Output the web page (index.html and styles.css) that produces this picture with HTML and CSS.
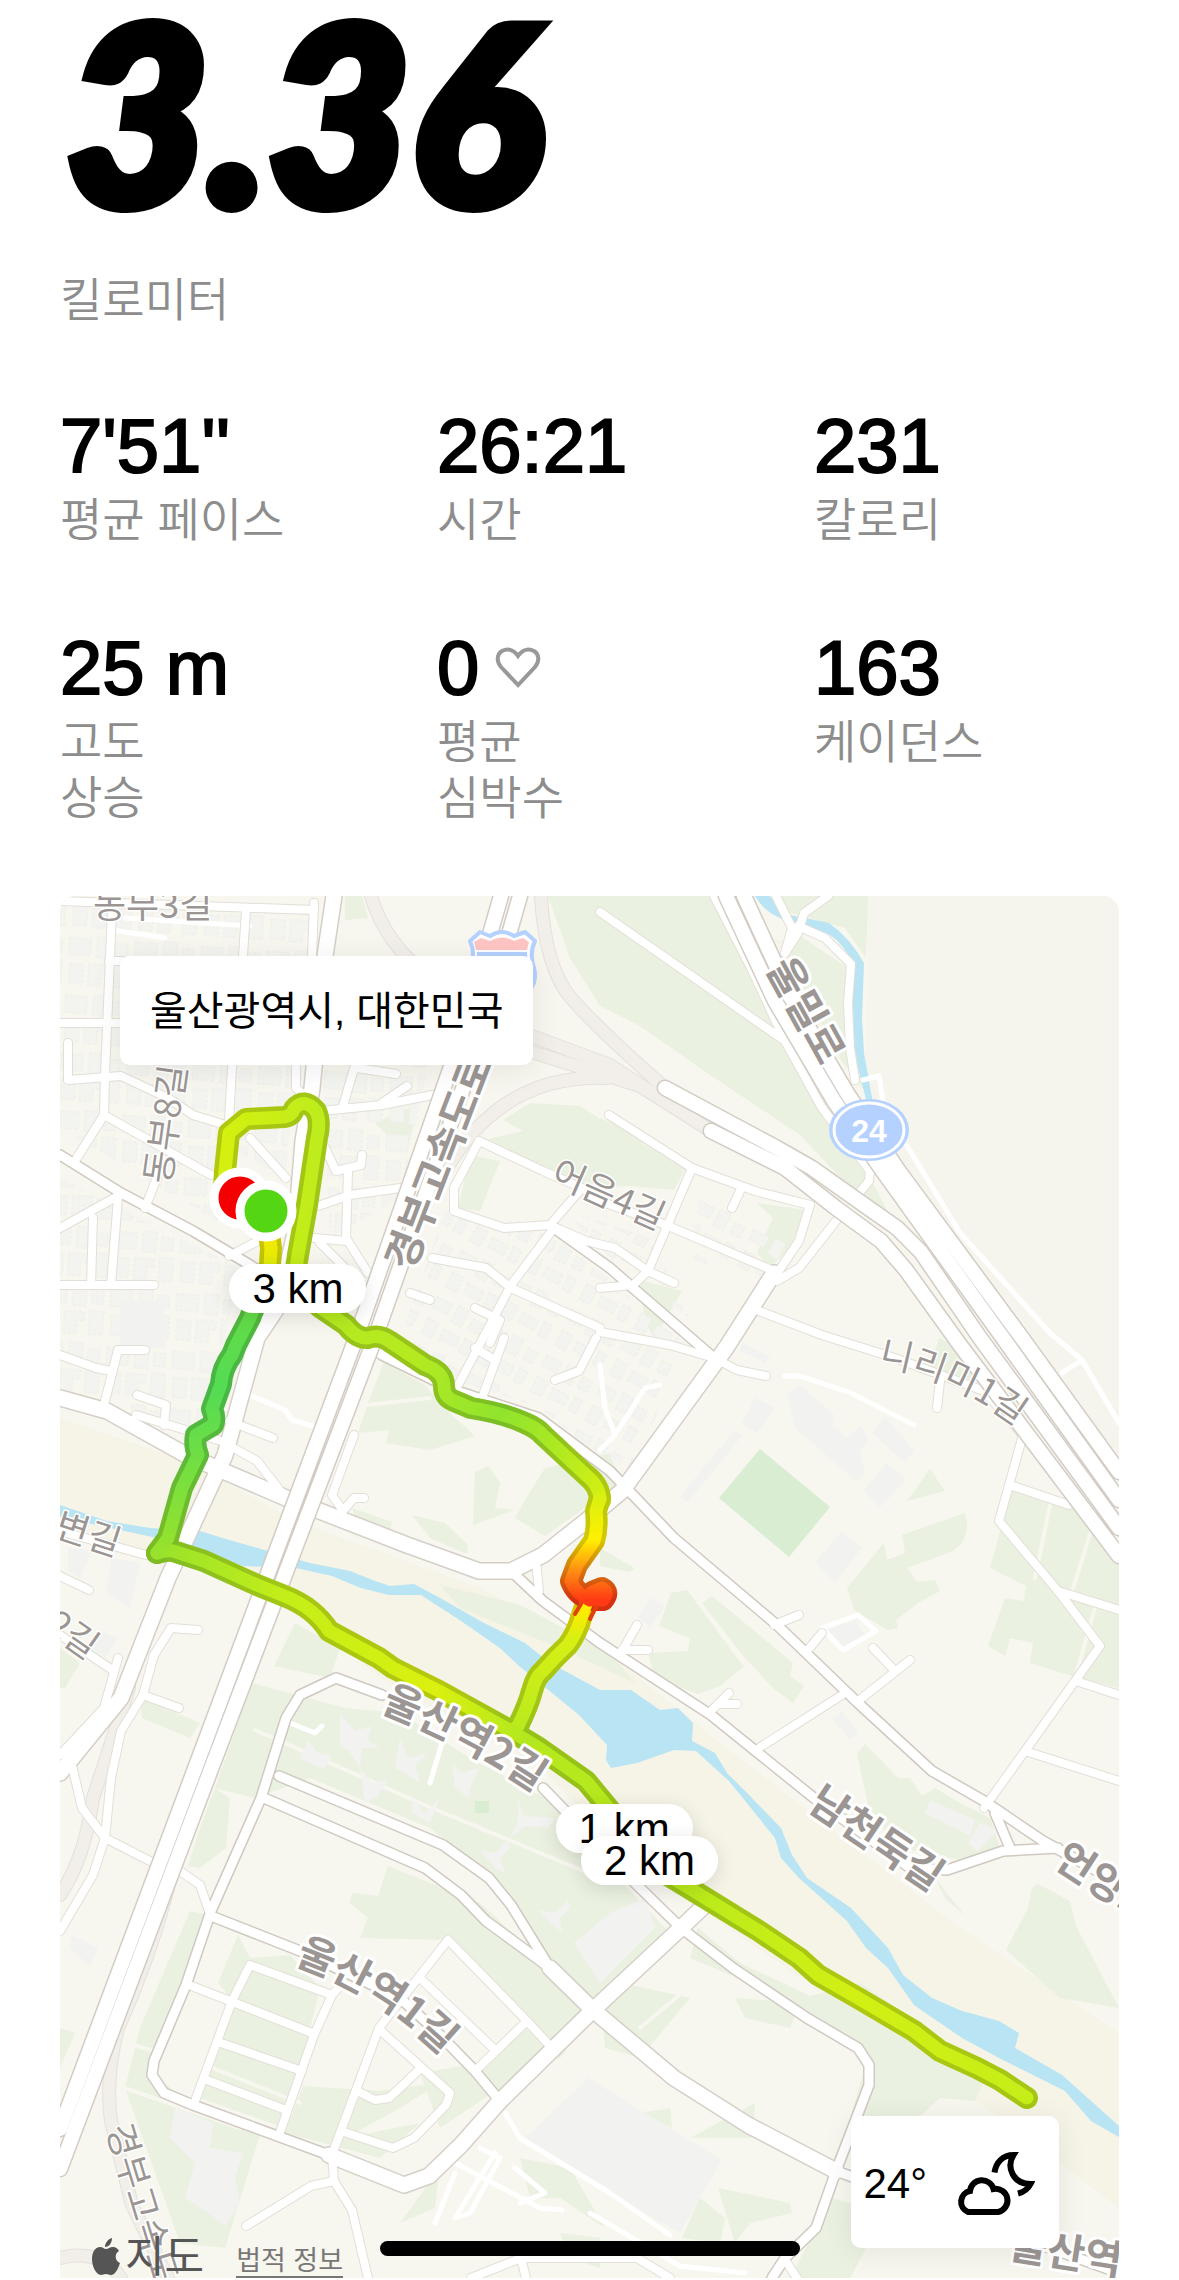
FILE: index.html
```html
<!DOCTYPE html>
<html lang="ko">
<head>
  <meta charset="UTF-8">
  <meta name="viewport" content="width=device-width, initial-scale=1.0">
  <title>러닝 기록</title>
  <link rel="stylesheet" href="styles.css">
</head>
<body>
  <main class="run">
    <header class="distance">
      <h1 class="distance-value">3.36</h1>
      <p class="label">킬로미터</p>
    </header>

    <section class="stats">
      <div class="stat">
        <p class="value">7'51''</p>
        <p class="label">평균 페이스</p>
      </div>
      <div class="stat">
        <p class="value">26:21</p>
        <p class="label">시간</p>
      </div>
      <div class="stat">
        <p class="value">231</p>
        <p class="label">칼로리</p>
      </div>
      <div class="stat">
        <p class="value">25 m</p>
        <p class="label">고도<br>상승</p>
      </div>
      <div class="stat">
        <p class="value">0
          <svg class="heart" viewBox="0 0 46 42" aria-hidden="true"><path d="M23 38 L6 20 C1 14 2 7 7 4 C13 1 19 3 23 9 C27 3 33 1 39 4 C44 7 45 14 40 20 Z"/></svg>
        </p>
        <p class="label">평균<br>심박수</p>
      </div>
      <div class="stat">
        <p class="value">163</p>
        <p class="label">케이던스</p>
      </div>
    </section>

    <section class="map">
      <svg class="map-canvas" viewBox="60 898 1059 1382" aria-label="러닝 경로 지도">
        <defs>
          <pattern id="houses" width="66" height="58" patternUnits="userSpaceOnUse" patternTransform="rotate(4)">
            <path class="house" d="M3 4h22v17h-22zM31 2h14v21h-14zM50 7h12v13h-12zM5 30h14v20h-14zM24 29h20v9h-7v13h-13zM49 27h14v24h-14z"/>
          </pattern>
          <pattern id="houses-tilted" width="62" height="52" patternUnits="userSpaceOnUse" patternTransform="rotate(28)">
            <path class="house" d="M4 5h17v12h-17zM27 3h12v18h-12zM46 8h11v12h-11zM6 28h12v17h-12zM25 31h18v11h-18zM48 29h9v15h-9z"/>
          </pattern>

          <g id="ramps">
            <path d="M371 898Q385 945 425 975L529 1037L610 1067L711 1133M541 898Q545 970 571 1000T665 1090M529 1053L640 1088L711 1133M443 1177Q500 1075 607 1080"/>
            <path d="M129 1690L93 1800Q85 1860 60 1897M168 1890Q150 1960 118 2030Q105 2080 111 2123L132 2207L168 2280M60 2260Q100 2250 121 2280"/>
          </g>
          <g id="lanes">
            <path d="M60 903L314 912M112 912L105 1077L104 1117L75 1163M246 912L243 958L232 1070L229 1122M314 905L312 958M60 1025L121 1025M109 963L122 963"/>
            <path d="M68 1045V1082L121 1078L168 1100L193 1117L229 1128M104 1117L211 1177M60 1230L118 1198M145 1210L160 1172M118 1200L111 1287M93 1220L91 1287M60 1287H154M229 1258L264 1240M250 1140L286 1180"/>
            <path d="M296 1060V1090L314 1106M321 1113L382 1107L432 1097M357 1060L343 1108M357 1070L396 1076M382 1105L407 1088M325 1150L336 1173L361 1167L362 1157M348 1173L346 1240L368 1275M318 1208L350 1197L400 1190M314 1240L346 1243M320 1245L360 1285"/>
            <path d="M454 1213V1190L479 1143L543 1173L582 1190L600 1203L666 1227L774 1273M454 1213L504 1230L550 1227L586 1243L615 1250L648 1273L674 1285M550 1227L582 1190M554 1230L511 1287L454 1395M432 1260L486 1270L511 1290L600 1330M410 1295L430 1302M475 1310L500 1322L490 1345"/>
            <path d="M609 1117L692 1170L755 1193L810 1207L799 1243L774 1280M692 1170L648 1273L633 1287L600 1290M740 1193L732 1210M836 1223L799 1270L777 1283M759 1313L822 1337L895 1360L984 1393L1023 1437L999 1523L1058 1593L1100 1648L1025 1753L984 1810"/>
            <path d="M1010 1487L1069 1507M1058 1593L1119 1612M1076 1683L1119 1697M1025 1753L1119 1783M940 1383L937 1410M600 1334L670 1347L714 1360L737 1372L766 1378"/>
            <path d="M759 1750L842 1697M858 1703L910 1662M895 1673L873 1650M774 1627L799 1617M807 1653L822 1635M622 1653L637 1627M622 1652H648M711 1713L729 1695M718 1706H737M536 1563L539 1593"/>
            <path d="M714 898L751 970L785 1043L822 1110L870 1173L869 1183L855 1200M776 898L792 930L785 955M828 898L804 915L798 935L785 955M798 928L825 940L851 966L848 1005L850 1050L855 1082M600 914L785 1043"/>
            <path d="M60 1357L96 1370L111 1373M104 1407L118 1352H145M137 1397L166 1407L164 1427M229 1423L273 1440M354 1437L332 1497L343 1513L354 1500H364M504 1340L482 1400M475 1350L496 1363M596 1340L579 1373L555 1382M136 1417L186 1432L221 1443L257 1463L286 1500"/>
            <path d="M60 1933L93 1877L105 1840L111 1780L121 1733L143 1697L154 1657L171 1630L198 1632M143 1697L179 1710M71 1763L82 1810L105 1840L150 1863M180 1873L200 1887L209 1913M60 1757L104 1710L118 1660M60 1637L114 1673M60 1578L89 1592M60 1533L146 1557"/>
            <path d="M232 2003L250 1967L332 1997L341 1987M232 2003L195 2103M332 1997L314 2037L279 2137M189 1987L312 2035M221 2045L302 2073M207 2082L286 2112"/>
            <path d="M448 1942L527 2023L550 2048M448 1942L418 1980L379 2030L332 2157L334 2183L352 2212L368 2280M420 1980L493 2050M527 2023L475 2073M380 2032L450 2095L446 2107L414 2140L393 2150L341 2133M421 2070L389 2100L375 2102L357 2093M334 2183L311 2188L246 2228"/>
            <path d="M471 2280L521 2260H637L670 2280M521 2260L526 2280M785 2262L797 2280"/>
          </g>
          <g id="streets">
            <path d="M60 1157L121 1195L193 1233L250 1267L320 1312L382 1357L454 1392L539 1420L610 1473L674 1540L777 1627L858 1705L932 1773L984 1803L1043 1843L1119 1885"/>
            <path d="M554 1230L610 1270L633 1290L714 1360M511 1573L543 1603L600 1645L711 1717L814 1800L910 1870L947 1872L1003 1853L1058 1850M995 1815L1010 1850"/>
            <path d="M382 1697L336 1680L300 1697L286 1720L261 1800L211 1913L186 1987L154 2063L152 2077L164 2095L193 2107L329 2157M264 1800L425 1870L461 1897L486 1923L550 1970M279 1778L443 1847L489 1880L511 1907L550 1970M211 1918L300 1953L400 2000L436 2033L475 2073L500 2103"/>
            <path d="M543 1790L637 1887L681 1930L733 1970L807 2020L858 2050L869 2067V2087L836 2173L816 2230L785 2260L772 2280M836 2173L1119 2275"/>
          </g>
          <g id="avenues">
            <path d="M60 1400L107 1413L186 1457L286 1500L407 1547L479 1573H511L543 1557L586 1523L622 1493L726 1350L774 1275"/>
            <path d="M329 2157L404 2187L429 2178L461 2147L500 2103L593 2012L681 1930L707 1905M550 1970L593 2012L674 2080L748 2127L836 2173"/>
            <path d="M334 898L325 958L312 1090L303 1143L296 1230L279 1307L257 1340L225 1457L168 1580L121 1700L60 1775"/>
          </g>
          <g id="highways">
            <path d="M501 898L454 1060L356 1340L184 1800L60 2131M520 898L472 1065L375 1340L200 1800L60 2171"/>
            <path d="M726 898L775 1003L834 1103L882 1172L1003 1340L1119 1502M744 898L791 1000L847 1095L898 1172L1022 1340L1119 1474"/>
            <path d="M665 1090L777 1150L812 1170L860 1204L897 1230L921 1254L980 1340L1119 1530M711 1133L785 1170L836 1210L881 1243L906 1272L960 1347L1119 1558"/>
          </g>

          <linearGradient id="north" gradientUnits="userSpaceOnUse" x1="0" y1="1215" x2="0" y2="1555">
            <stop offset="0" stop-color="#ffe600"/>
            <stop offset=".14" stop-color="#e6ec08"/>
            <stop offset=".3" stop-color="#63dc48"/>
            <stop offset=".52" stop-color="#54dc54"/>
            <stop offset="1" stop-color="#98e22c"/>
          </linearGradient>
          <linearGradient id="river" gradientUnits="userSpaceOnUse" x1="157" y1="0" x2="1027" y2="0">
            <stop offset="0" stop-color="#98e22c"/>
            <stop offset=".15" stop-color="#c4ee18"/>
            <stop offset=".32" stop-color="#daf010"/>
            <stop offset=".42" stop-color="#b4e81e"/>
            <stop offset=".6" stop-color="#b8ea1c"/>
            <stop offset=".8" stop-color="#d2f014"/>
            <stop offset="1" stop-color="#c6ee18"/>
          </linearGradient>
          <linearGradient id="bridge" gradientUnits="userSpaceOnUse" x1="0" y1="1612" x2="0" y2="1733">
            <stop offset="0" stop-color="#ffec00"/>
            <stop offset=".25" stop-color="#d6f014"/>
            <stop offset="1" stop-color="#b8ea1e"/>
          </linearGradient>
          <linearGradient id="hot" gradientUnits="userSpaceOnUse" x1="0" y1="1490" x2="0" y2="1602">
            <stop offset="0" stop-color="#d2f014"/>
            <stop offset=".46" stop-color="#fff000"/>
            <stop offset=".72" stop-color="#ff9412"/>
            <stop offset="1" stop-color="#ff3a14"/>
          </linearGradient>
          <linearGradient id="east" gradientUnits="userSpaceOnUse" x1="296" y1="1300" x2="600" y2="1497">
            <stop offset="0" stop-color="#b4ea20"/>
            <stop offset=".35" stop-color="#b6ea20"/>
            <stop offset=".65" stop-color="#90e42e"/>
            <stop offset=".8" stop-color="#a8e824"/>
            <stop offset="1" stop-color="#d2f014"/>
          </linearGradient>
          <linearGradient id="loop" gradientUnits="userSpaceOnUse" x1="225" y1="0" x2="318" y2="0">
            <stop offset="0" stop-color="#d4f010"/>
            <stop offset="1" stop-color="#bfec1c"/>
          </linearGradient>

          <g id="route">
            <path stroke="url(#bridge)" d="M511 1733L518 1728Q528 1708 532 1693T543 1673Q555 1659 568 1647Q577 1635 582 1617L586 1606"/>
            <path stroke="url(#river)" d="M157 1555Q166 1552 173 1553L204 1563L257 1587L282 1597Q300 1604 311 1613Q322 1622 329 1633L379 1660L393 1670L439 1693L511 1733L539 1750L586 1783L610 1812L640 1860L689 1890L759 1933L799 1960L818 1977L858 2000L914 2033L940 2053L977 2070L1000 2082L1027 2100"/>
            <path stroke="url(#north)" d="M266 1213L271 1250L270 1267L250 1320L236 1347L232 1357Q222 1370 221 1386L212 1411Q216 1420 213 1427L196 1437Q194 1448 198 1457L182 1490L168 1540L157 1555"/>
            <path stroke="url(#loop)" d="M239 1200L224 1192L225 1173L229 1135L246 1121L266 1120L284 1119Q292 1118 294 1111Q304 1099 316 1113Q321 1124 317 1140L307 1207L298 1257L294 1284"/>
            <path stroke="url(#east)" d="M294 1284L321 1310L346 1327Q357 1341 368 1340Q379 1336 389 1343L425 1367Q444 1374 444 1388Q444 1398 452 1402L471 1410Q503 1415 525 1425Q537 1430 543 1437L586 1477Q600 1488 600 1502"/>
            <path stroke="url(#hot)" d="M600 1500L596 1513Q598 1530 594 1543L577 1567L571 1583Q576 1596 590 1602L603 1602Q610 1594 602 1590L592 1594"/>
          </g>
        </defs>

        <!-- land -->
        <rect class="land" x="60" y="898" width="1059" height="1382"/>
        <path class="hill" d="M866 898H1119V1460L1020 1330L895 1150L865 1090L868 960Z"/>
        <path class="sand" d="M60 1420L190 1465L300 1525L480 1590L620 1665L720 1745L830 1830L960 1930L1119 2035V2210L1000 2120L860 2020L640 1870L540 1770L380 1680L290 1605L170 1560L60 1525Z"/>
        <path class="sand" d="M775 940L860 980L862 1090L800 1010Z"/>

        <g class="green">
          <path d="M345 898H362L368 920L345 922Z"/>
          <path d="M548 898H710L785 1045L870 1180L905 1245L860 1200L800 1137L700 1070L640 1028L600 1008L570 960Z"/>
          <path d="M765 898H868L866 960L845 930L780 912ZM785 955L800 938L845 968L845 1050L870 1100L840 1060Z"/>
          <path d="M503 1122L530 1105L580 1108L609 1127L686 1170L674 1192L630 1188L582 1190L480 1143L523 1133ZM470 1157L500 1163L480 1213L458 1210ZM375 1125L420 1105L408 1148L390 1140Z"/>
          <path d="M757 1205L806 1212L790 1250L770 1270L757 1255L773 1220ZM640 1282L682 1293L655 1340L645 1325ZM600 1120L645 1140L632 1180L600 1165Z"/>
          <path d="M384 1364L425 1387L442 1408L475 1438L430 1452L386 1445L389 1432L358 1435L368 1405Z"/>
          <path d="M545 1470L610 1455L620 1485L545 1538L515 1520L525 1502ZM475 1474L488 1468L500 1485L495 1510L514 1512L473 1527ZM352 1510L392 1524L390 1532L355 1520ZM412 1517L445 1525L468 1547L467 1556L430 1540ZM440 1587L520 1607L610 1655L635 1685L560 1650L460 1610Z"/>
          <path d="M939 1340L960 1350L985 1385L930 1372ZM930 1471L945 1493L907 1503ZM902 1537L965 1515Q972 1540 953 1553L907 1570L917 1584L935 1582L940 1593L918 1605L896 1622L898 1630L888 1632L855 1613L847 1590L884 1545L887 1562L905 1555Z"/>
          <path d="M600 1550L634 1570L630 1574L600 1568ZM671 1595L687 1592L740 1664L744 1668L720 1688L698 1696L655 1680L648 1655L688 1653L690 1640L659 1628ZM702 1605L712 1598L793 1665L790 1678L804 1688L793 1705L773 1690L745 1660Z"/>
          <path d="M1012 1490L1070 1505L1119 1560V1690L1072 1678L1030 1665L1033 1645L1010 1640L1005 1658L988 1648L1005 1600L1024 1603L1026 1588L990 1570Z"/>
          <path d="M857 1756L865 1746L898 1780L910 1780L922 1798L935 1790L960 1805L990 1820L1000 1850L975 1865L900 1850L870 1815ZM935 1880L965 1918L945 1900ZM1038 1886L1070 1903L1076 1928L1119 2010L1060 2000L1006 1952L1028 1910L1032 1890Z"/>
          <path d="M295 1625L340 1650L330 1680L274 1668ZM252 1685L345 1710L400 1715L470 1760L545 1800L590 1850L670 1935L600 2020L545 1970L500 1890L430 1830L310 1780L255 1800L215 1790ZM140 1700L200 1725L190 1740L142 1720ZM60 1650L80 1665L65 1690H60Z"/>
          <path d="M215 1790L230 1800L226 1850L200 1870L188 1868L200 1830ZM388 1868L480 1905L545 1965L590 2020L560 2060L475 2074L527 2030L448 1942L360 1940L368 1920L350 1905L352 1895L378 1898ZM190 1913L204 1916L152 2077L195 2107L262 2130L225 2250L180 2245L125 2090L140 2030Z"/>
          <path d="M238 1937L250 1960L290 1957L320 1990L285 2130L200 2100L235 2005L218 1985ZM303 2088L380 2093L440 2085L400 2110L345 2140L420 2125L380 2160L285 2135ZM420 2075L540 2055L500 2090L440 2130Z"/>
          <path d="M698 1930L740 1965L810 1998L860 1985L900 2012L985 2080L975 2103L940 2100L918 2120L850 2120L868 2060L860 2048L760 1990L690 1960ZM600 1980L690 2000L640 2060L605 2050ZM735 2000L800 2005L790 2030L745 2020ZM755 2105L753 2140L690 2140ZM718 2190L790 2205L792 2215L750 2225L735 2245ZM682 2240L700 2200L725 2220L720 2245ZM640 2115L670 2110L672 2130ZM832 2200L866 2210L865 2252L850 2280H790Z"/>
          <path d="M520 2160L570 2170L605 2230L560 2200L530 2200ZM400 2225L440 2170L435 2210ZM560 2235L600 2240L600 2270L570 2260ZM60 2030L75 2035L60 2070Z"/>
        </g>
        <path class="pitch" d="M760 1451L830 1509L789 1559L719 1500ZM475 1803H489V1815H475Z"/>
        <path class="trail" d="M255 1732L330 1765L420 1805L600 1880M125 2045L200 2065L300 2105M125 2090L240 2130M1050 1507L1035 1580M1092 1530L1070 1600M1095 1610L1075 1680M358 1408L430 1400M640 2030L690 1988L780 1998"/>

        <!-- buildings -->
        <path fill="url(#houses)" d="M60 905L310 915L308 1060L290 1130L285 1180L230 1150L229 1230L60 1130ZM320 1060L430 1060L400 1200L330 1240L325 1130ZM60 1180L240 1270L225 1340L200 1430L60 1390Z"/>
        <path fill="url(#houses-tilted)" d="M445 1215L550 1235L600 1275L690 1350L630 1470L590 1450L540 1410L420 1370L400 1340ZM560 1210L650 1240L690 1320L610 1260ZM700 1200L790 1240L760 1290L690 1260Z"/>
        <g class="building">
          <path d="M120 1303H165V1350H120ZM787 1395L800 1387L835 1418L832 1428L848 1440L860 1427L868 1440L860 1455L865 1475L856 1483L795 1430ZM885 1418L914 1452L905 1465L872 1435ZM887 1465L906 1482L880 1509L863 1493ZM842 1533L862 1550L835 1584L815 1565ZM755 1400L775 1410L757 1435L742 1425ZM735 1432L742 1438L688 1504L680 1498Z"/>
          <path d="M742 1345L770 1358L765 1365L740 1353ZM652 1600L665 1608L650 1630L638 1618ZM825 1633L855 1622L868 1640L842 1655ZM832 1720L842 1713L858 1735L850 1742Z"/>
          <path d="M112 1560L140 1565L130 1610L106 1595ZM98 1632L118 1640L105 1660L88 1650ZM68 1550L92 1552L80 1580L68 1572ZM72 1937L98 1950L90 1968L70 1950ZM175 2110L213 2125L210 2150L243 2155L235 2180L240 2205L225 2228L208 2215L185 2200L195 2165L170 2140Z"/>
          <path d="M588 2080L722 2162L680 2235L600 2190L525 2140ZM574 1945L610 1915L645 1900L655 1930L600 1985ZM930 1802L975 1822L970 1838L925 1815ZM980 1824L997 1833L978 1853L968 1845Z"/>
          <path d="M340 1715L355 1733L372 1728L368 1742L380 1750L362 1750L360 1770L348 1752L340 1748ZM400 1740L408 1760L428 1755L415 1768L420 1785L405 1775L395 1770ZM308 1742L318 1755L332 1758L325 1770L315 1768L300 1760ZM452 1765L462 1775L480 1770L472 1785L468 1800L455 1790ZM360 1770L372 1785L388 1782L378 1798L365 1805ZM412 1800L425 1815L440 1800L430 1825L412 1815ZM518 1800L524 1818L555 1820L548 1830L525 1828L510 1840L518 1822ZM480 1852L495 1855L508 1842L510 1850L500 1860L505 1875L495 1870ZM538 1912L555 1915L568 1902L570 1910L560 1920L562 1935L550 1925Z"/>
        </g>

        <!-- water -->
        <path class="water" d="M755 898H769L790 917L829 925Q850 940 864 965L862 1020L864 1055L873 1105H867L858 1070L850 1020L854 968Q842 942 826 935L785 922Q765 915 755 898Z"/>
        <path class="water" d="M60 1507L107 1523L150 1530L200 1533L229 1542L268 1553L310 1565L350 1573L375 1583L390 1588L414 1586L440 1600L484 1625L525 1645L550 1665L600 1692H631L660 1712L678 1710L693 1725L692 1743L715 1755L727 1775L750 1798L781 1830L792 1857L807 1880L851 1910L888 1950L903 1977L932 2000L962 2013L999 2023L1019 2035L1015 2050L1062 2077L1119 2128V2139L1091 2123L1065 2093L999 2060L962 2040L914 2007L888 1970L866 1950L847 1923L799 1880L781 1860L775 1840L729 1783L696 1753L674 1752L637 1765L611 1770L606 1762L607 1747L579 1717L518 1667L500 1650L461 1623L421 1597H389L361 1590L332 1578L296 1570L243 1568L200 1553L157 1540L60 1519Z"/>

        <!-- ramps and rail -->
        <use href="#ramps" class="ramp-edge"/>
        <use href="#ramps" class="ramp-fill"/>

        <!-- footpaths -->
        <path class="path" d="M112 932L165 940M125 920L250 928M785 1378L800 1378L851 1395L914 1427M600 1367L605 1410L615 1437L645 1390L660 1387M615 1437L600 1452M822 1630L858 1617L876 1633L843 1652ZM863 1082L879 1078L884 1110L960 1235L1050 1335L1082 1362L1062 1375M1082 1362L1119 1425M245 1395L285 1412L292 1422L320 1430L345 1355M455 2165L540 2210L562 2212M480 2150L500 2160L470 2215L455 2220L495 2155M515 2170L545 2195L520 2205M505 2115L520 2140L610 2195L670 2237M435 2225L455 2175M590 2215L680 2268L745 2275M290 1725L315 1735L322 1728M445 1735L430 1785"/>

        <!-- roads: edges first, then surfaces -->
        <use href="#lanes" class="lane-edge"/>
        <use href="#streets" class="street-edge"/>
        <use href="#avenues" class="avenue-edge"/>
        <use href="#lanes" class="lane-fill"/>
        <use href="#streets" class="street-fill"/>
        <use href="#avenues" class="avenue-fill"/>
        <use href="#highways" class="highway-edge"/>
        <use href="#highways" class="highway-fill"/>

        <!-- road shields -->
        <g>
          <path class="shield" d="M470 943L480 934L490 938Q502 930 514 938L525 934L535 943Q529 955 534 970Q541 995 502 1010Q463 995 470 970Q476 955 470 943Z"/>
          <path class="shield-top" d="M474 944L481 940L490 943Q502 936 514 943L523 940L529 944L527 952H476Z"/>
          <path class="shield-body" d="M477 954H527Q530 990 502 1000Q474 990 477 954Z"/>
          <ellipse class="badge" cx="869" cy="1132" rx="40" ry="31"/>
          <ellipse class="badge-ring" cx="869" cy="1132" rx="35" ry="27"/>
          <text class="badge-text" x="869" y="1144">24</text>
        </g>

        <!-- route -->
        <use href="#route" class="route-base"/>
        <use href="#route" class="route-base route-shade"/>
        <use href="#route" class="route-core"/>
        <path class="route-tick" d="M581 1606L575 1616M596 1609L590 1621"/>

        <!-- road names -->
        <path id="name-station2" class="guide" d="M380 1713Q475 1750 560 1812"/>
        <path id="name-station1" class="guide" d="M294 1966Q380 1995 450 2066"/>
        <path id="name-nirimi" class="guide" d="M878 1367Q955 1380 1025 1435"/>
        <g class="road-name minor">
          <text x="93" y="920">동부3길</text>
          <text transform="translate(170 1187) rotate(-82)">동부8길</text>
          <text transform="translate(549 1184) rotate(24)">어음4길</text>
          <text><textPath href="#name-nirimi">니리미1길</textPath></text>
          <text transform="translate(53 1538) rotate(18)">변길</text>
          <text transform="translate(44 1632) rotate(35)">2길</text>
          <text transform="translate(106 2130) rotate(73)">경부고속도로</text>
        </g>
        <g class="road-name major">
          <text transform="translate(412 1275) rotate(-69)">경부고속도로</text>
          <text transform="translate(766 970) rotate(61)">울밀로</text>
          <text><textPath href="#name-station2">울산역2길</textPath></text>
          <text><textPath href="#name-station1">울산역1길</textPath></text>
          <text transform="translate(806 1810) rotate(34)">남천둑길</text>
          <text transform="translate(1052 1867) rotate(33)">언양로</text>
          <text transform="translate(1008 2260) rotate(9)">울산역로</text>
        </g>

        <g class="endpoint">
          <circle class="finish" cx="240" cy="1200" r="26"/>
          <circle class="start" cx="266" cy="1213" r="26"/>
        </g>
      </svg>

      <span class="km km-3">3 km</span>
      <span class="km km-1">1 km</span>
      <span class="km km-2">2 km</span>

      <p class="place">울산광역시, 대한민국</p>

      <div class="weather">
        <span>24°</span>
        <svg class="weather-icon" viewBox="0 0 80 64" aria-hidden="true">
          <path d="M13 60A11 11 0 0 1 15 39A12 12 0 0 1 38.500 37A11.500 11.500 0 0 1 43 60Z"/>
          <path d="M39.500 20.500C41 10 48 3 58.500 3C51 15 58 32 75.500 32C73 37 69 40 63 41.500"/>
        </svg>
      </div>

      <div class="legal">
        <svg class="apple" viewBox="0 0 28 38" aria-hidden="true"><path d="M20 0C20 5 17 9 13 9C13 5 16 1 20 0ZM14 11C16 11 18 9 21 9C24 9 26 11 27 13C22 16 23 23 28 25C26 31 23 37 19 37C17 37 16 36 14 36S11 37 9 37C4 37 0 28 0 21C0 13 4 9 8 9C11 9 12 11 14 11Z"/></svg>
        <span class="maps">지도</span>
        <a class="legal-link" href="#">법적 정보</a>
      </div>
    </section>
  </main>
  <div class="home-bar"></div>
</body>
</html>
```

FILE: styles.css
```css
body {
  margin: 0;
  background: #fff;
  color: #000;
  font-family: "Liberation Sans", "Noto Sans CJK KR", sans-serif;
}

h1,
p {
  margin: 0;
}

.run {
  padding: 0 60px;
}

.distance-value {
  padding: 0 6px 52px;
  font-family: Lato, sans-serif;
  font-size: 246px;
  font-weight: 900;
  font-style: italic;
  line-height: 220px;
  -webkit-text-stroke: 12px #000;
}

.label {
  color: #8d8d8d;
  font-size: 46px;
  font-weight: 350;
  line-height: 56px;
}

.stats {
  display: grid;
  grid-template-columns: repeat(3, 1fr);
  gap: 74px 72px;
  padding: 72px 0 70px;
}

.value {
  display: flex;
  align-items: center;
  gap: 16px;
  font-size: 76px;
  line-height: 92px;
  -webkit-text-stroke: 2px #000;
}

.heart {
  width: 46px;
  height: 42px;
  fill: none;
  stroke: #999;
  stroke-width: 4;
}

/* map */
.map {
  position: relative;
  overflow: hidden;
  border-radius: 16px 16px 0 0;
}

.map-canvas {
  display: block;
  width: 100%;
  height: auto;
  stroke-linejoin: round;
  stroke-linecap: round;
}

.land { fill: #f7f6ef; }
.hill { fill: #f6f5ed; }
.sand { fill: #f6f3e7; }
.green { fill: #eaf1e0; }
.pitch { fill: #d8edd1; }
.water { fill: #b8e4f3; }
.building { fill: #f2f2f1; }

.house {
  fill: #f3f3f0;
  stroke: #ecece7;
  stroke-dasharray: 2 3;
}

.trail,
.path {
  fill: none;
  stroke: #f7f6ef;
  stroke-width: 4;
}

.path {
  stroke: #fff;
  stroke-width: 5;
}

.ramp-edge,
.ramp-fill,
.lane-edge,
.lane-fill,
.street-edge,
.street-fill,
.avenue-edge,
.avenue-fill,
.highway-edge,
.highway-fill {
  fill: none;
  stroke: #fff;
}

.ramp-edge { stroke: #e4e0da; stroke-width: 14; }
.ramp-fill { stroke: #f2efea; stroke-width: 12; }
.lane-edge { stroke: #e3dfd8; stroke-width: 10; }
.lane-fill { stroke-width: 8; }
.street-edge { stroke: #d0c9c2; stroke-width: 12; }
.street-fill { stroke-width: 9; }
.avenue-edge { stroke: #d5cfc8; stroke-width: 18; }
.avenue-fill { stroke-width: 15; }
.highway-edge { stroke: #d2ccc4; stroke-width: 17; }
.highway-fill { stroke-width: 14; }

.shield {
  fill: #fff;
  stroke: #b4d1ff;
  stroke-width: 4;
}

.shield-top { fill: #ffc4c4; }
.shield-body,
.badge { fill: #b4d1ff; }

.badge-ring {
  fill: none;
  stroke: #fff;
  stroke-width: 3;
}

.badge-text {
  fill: #fff;
  font-size: 32px;
  font-weight: 700;
  text-anchor: middle;
}

.route-base {
  fill: none;
  stroke-width: 22;
}

.route-shade {
  filter: brightness(0);
  opacity: .16;
}

.route-core {
  fill: none;
  stroke-width: 13;
}

.route-tick {
  stroke: #e0400c;
  stroke-width: 4;
}

.guide {
  fill: none;
}

.road-name {
  fill: #9b9693;
  stroke: #fff;
  stroke-width: 6;
  paint-order: stroke;
  font-family: "Noto Sans CJK KR", sans-serif;
}

.minor {
  font-size: 36px;
  stroke-width: 3;
}

.major {
  font-size: 41px;
  font-weight: 700;
}

.endpoint {
  stroke: #fff;
  stroke-width: 9;
}

.finish { fill: #f40000; }
.start { fill: #54d614; }

.km {
  position: absolute;
  padding: 0 23px;
  border-radius: 25px;
  background: #fff;
  box-shadow: 0 4px 20px rgba(0, 0, 0, .12);
  font-size: 42px;
  line-height: 49px;
}

/* pins, as a share of the map */
.km-3 { left: 16%; top: 26.6%; }
.km-1 { left: 46.8%; top: 65.7%; }
.km-2 { left: 49.2%; top: 68%; }

.place,
.weather {
  position: absolute;
  border-radius: 10px;
  background: #fff;
  box-shadow: 0 4px 30px rgba(0, 0, 0, .08);
}

.place {
  top: 60px;
  left: 60px;
  padding: 2px 30px 0;
  font-size: 40px;
  line-height: 107px;
}

.weather {
  right: 60px;
  bottom: 30px;
  display: flex;
  align-items: center;
  gap: 28px;
  box-sizing: border-box;
  height: 132px;
  padding: 4px 24px 0 12px;
  font-size: 42px;
}

.weather-icon {
  width: 80px;
  height: 64px;
  fill: none;
  stroke: #000;
  stroke-width: 6;
}

.legal {
  position: absolute;
  left: 32px;
  bottom: 0;
  display: flex;
  align-items: flex-end;
  color: #555;
}

.apple {
  width: 28px;
  height: 38px;
  margin: 0 5px 2px 0;
  fill: #555;
}

.maps {
  font-size: 43px;
  line-height: 42px;
}

.legal-link {
  margin-left: 32px;
  border-bottom: 2px solid #777;
  color: #777;
  font-size: 27px;
  line-height: 29px;
  text-decoration: none;
}

.home-bar {
  position: fixed;
  bottom: 24px;
  left: 50%;
  width: 420px;
  height: 15px;
  border-radius: 8px;
  background: #000;
  transform: translateX(-50%);
}
```
